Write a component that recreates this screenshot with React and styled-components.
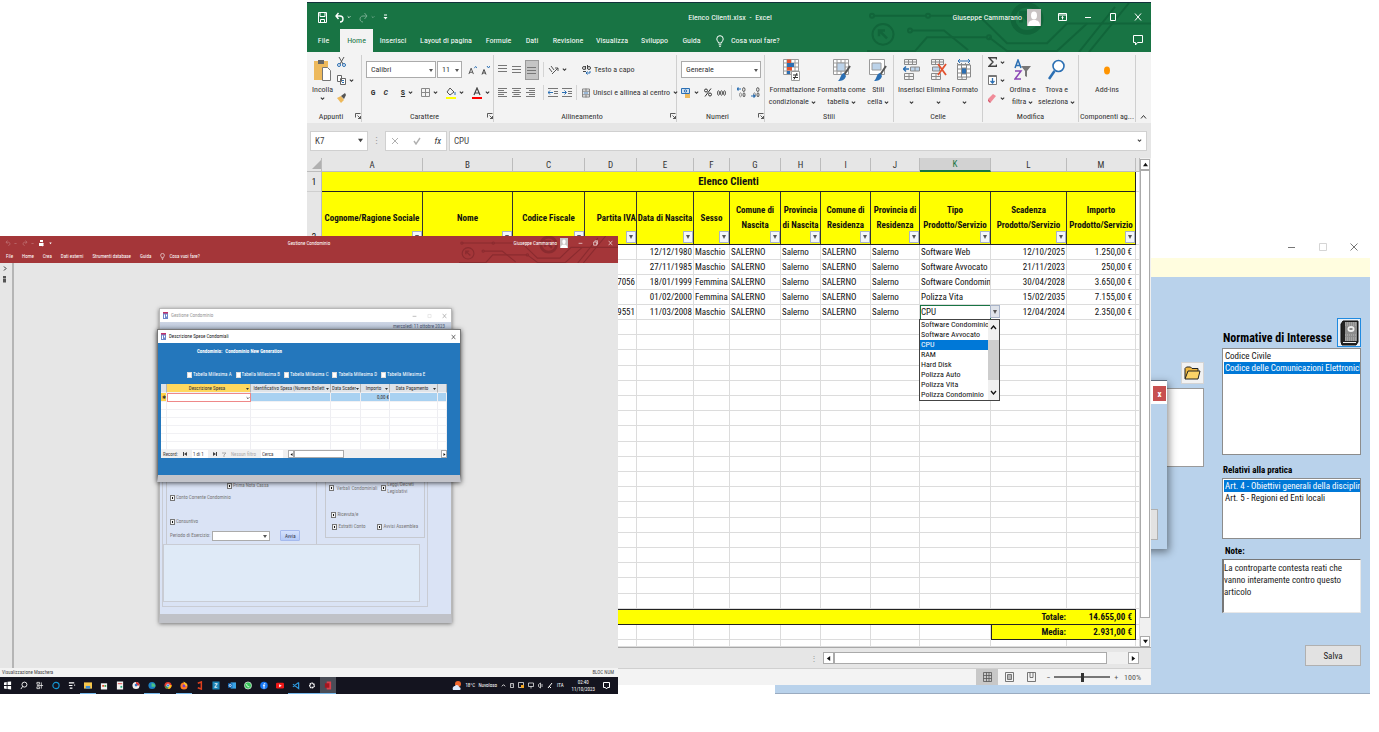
import React from "react";
import styled, { createGlobalStyle, css } from "styled-components";

const GlobalStyle = createGlobalStyle`
  *, *::before, *::after { box-sizing: border-box; }
  body { margin: 0; background: #fff; font-family: "Roboto Condensed", Roboto, "Liberation Sans", sans-serif; color: #222; }
  button, input, select, textarea { font: inherit; color: inherit; margin: 0; }
  button { border: 0; padding: 0; background: none; }
  svg { display: block; flex: none; }
  ul { list-style: none; margin: 0; padding: 0; }
`;

const Desktop = styled.main`
  position: relative;
  min-height: 100vh;
  overflow: hidden;
`;

/* ---------- shared pieces ---------- */
const Icon = ({ w = 10, h = w, box = `0 0 ${w} ${h}`, children, ...rest }) => (
  <svg width={w} height={h} viewBox={box} fill="none" stroke="currentColor" strokeWidth="1" aria-hidden="true" {...rest}>
    {children}
  </svg>
);

const Caret = ({ size = 5 }) => (
  <Icon w={size} h={size} box="0 0 6 6"><path d="M1 2l2 2 2-2" strokeWidth="1.3" /></Icon>
);

const Avatar = ({ w, h }) => (
  <Icon w={w} h={h} box="0 0 14 17" preserveAspectRatio="none" stroke="none">
    <rect width="14" height="17" fill="#c8c3c3" />
    <ellipse cx="7" cy="6.5" rx="3" ry="4" fill="#fff" />
    <path d="M1 17c0-4 2-6 6-6s6 2 6 6z" fill="#fff" />
  </Icon>
);

const Bulb = ({ w = 8, h = 12 }) => (
  <Icon w={w} h={h} box="0 0 8 12"><path d="M2.500 8C2.500 6.500.800 6 .800 3.900a3.200 3.200 0 016.400 0C7.200 6 5.500 6.500 5.500 8zM2.700 9.800h2.600M3.200 11.400h1.600" /></Icon>
);

const Circuit = styled.svg`
  position: absolute;
  top: 0;
  right: 0;
  height: 100%;
  width: ${p => p.$w}px;
  pointer-events: none;
`;

const CircuitArt = ({ w, color }) => (
  <Circuit $w={w} viewBox="0 0 286 50" preserveAspectRatio="none" fill="none" stroke={color} strokeWidth="2" aria-hidden="true">
    <circle cx="18" cy="32" r="10.500" /><path d="M14 28l8 8M14 34v-6h6" strokeWidth="2.500" />
    <circle cx="7" cy="13" r="2" /><path d="M9 13h52" /><circle cx="63" cy="13" r="2" />
    <circle cx="45" cy="28" r="2" /><path d="M47 28h32l24 20" />
    <path d="M2 49h48l12-14h60" /><circle cx="124" cy="35" r="2" />
    <circle cx="162" cy="16" r="14" strokeWidth="5" /><path d="M156 10l12 12M156 20V10h10" strokeWidth="4" />
    <path d="M64 13h50l28 28h40l20-20h84" />
    <path d="M124 35l18 14h50l30-28M214 50l36-46M224 50l40-50" />
  </Circuit>
);

/* ---------- spreadsheet window ---------- */
const ExcelWindow = styled.section`
  position: absolute;
  left: 307px;
  right: 228px;
  top: 2px;
  background: #e6e6e6;
  font-size: 8px;
  z-index: 2;
`;

const ExcelHead = styled.header`
  position: relative;
  background: #187444;
  color: #fff;
  border-top: 1px solid #12323c;
`;

const TitleRow = styled.div`
  position: relative;
  z-index: 1;
  display: grid;
  grid-template-columns: 1fr auto 1fr;
  align-items: center;
  height: 26px;
  padding: 2px 9px 0 11px;
`;

const Cluster = styled.div`
  display: flex;
  align-items: center;
  gap: ${p => p.$gap}px;
  justify-content: ${p => (p.$end ? "flex-end" : "flex-start")};
`;

const IconButton = styled.button`
  display: flex;
  align-items: center;
  justify-content: center;
  gap: 3px;
  opacity: ${p => (p.$dim ? 0.4 : 1)};
`;

const TabRow = styled.nav`
  position: relative;
  z-index: 1;
  display: flex;
  height: 23px;
  font-size: 8px;
`;

const Tab = styled.button`
  width: ${p => p.$w}px;
  white-space: nowrap;
  color: ${p => (p.$on ? "#187444" : "#fff")};
  background: ${p => (p.$on ? "#f3f3f3" : "transparent")};
`;

const TellMe = styled.button`
  display: flex;
  align-items: center;
  gap: 7px;
  margin-left: 8px;
`;

const Comments = styled(IconButton)`
  margin-left: auto;
  padding-right: 8px;
`;

const Ribbon = styled.div`
  display: flex;
  height: 71px;
  background: #f3f3f3;
  color: #333;
`;

const Group = styled.section`
  flex: ${p => p.$w} 1 ${p => p.$w}px;
  min-width: 0;
  display: flex;
  flex-direction: column;
  margin: 3px 0 1px;
  border-right: 1px solid #cfcfcf;
`;

const GroupBody = styled.div`
  flex: 1;
  display: flex;
  justify-content: ${p => (p.$spread ? "space-evenly" : "flex-start")};
  padding: 1px ${p => (p.$pad ?? 4)}px 0;
  gap: ${p => p.$gap ?? 0}px;
`;

const GroupLabel = styled.footer`
  display: flex;
  align-items: center;
  height: 12px;
  span { flex: 1; text-align: center; white-space: nowrap; }
`;

const Stack = styled.div`
  display: flex;
  flex-direction: column;
  padding-top: 2px;
`;

const ToolRow = styled.div`
  display: flex;
  align-items: center;
  height: 23px;
  gap: ${p => p.$gap ?? 5}px;
`;

const Tool = styled.button`
  display: flex;
  align-items: center;
  gap: 3px;
  white-space: nowrap;
  ${p => p.$on && css`background: #c5c5c5; outline: 1px solid #9a9a9a; padding: 3px 1px; height: 18px;`}
`;

const Rule = styled.i`
  width: 1px;
  height: 15px;
  background: #d4d4d4;
`;

const BigTool = styled.button`
  display: flex;
  flex-direction: column;
  align-items: center;
  justify-content: flex-start;
  line-height: 12px;
  white-space: nowrap;
  min-width: 0;
  b { font-weight: 400; height: 28px; display: flex; align-items: center; }
  span { display: flex; align-items: center; gap: 2px; height: 12px; }
`;

const SideTools = styled.div`
  display: flex;
  flex-direction: column;
  gap: 8px;
  padding-top: 1px;
  button { height: 10px; }
`;

const Picker = styled.label`
  position: relative;
  display: flex;
  width: ${p => p.$w}px;
  height: ${p => p.$h || 17}px;
  border: 1px solid #ababab;
  background: #fff;
  select { appearance: none; border: 0; background: transparent; width: 100%; padding: 0 4px; outline: 0; }
  &::after {
    content: "";
    position: absolute;
    right: 2px;
    top: calc(50% - 1px);
    border: 2px solid transparent;
    border-top: 3px solid #555;
    border-bottom: 0;
  }
`;

const Launcher = () => (
  <Icon w={6} h={6} box="0 0 6 6"><path d="M.500 4.500v-4h5M2.500 2.500l3 3M5.500 3v2.500H3" strokeWidth=".8" /></Icon>
);

const Lines = ({ rows = [1, 4, 7], short = false, align = 0 }) => (
  <Icon w={10} h={9} stroke="#777">
    {rows.map((y, i) => {
      const cut = short && i % 2 ? 3 : 0;
      return <path key={y} d={`M${(cut * align) / 2} ${y + 0.5}h${9 - cut}`} />;
    })}
  </Icon>
);

const FormulaBar = styled.div`
  display: flex;
  align-items: center;
  height: 35px;
  padding: 0 4px 0 3px;
  font-size: 9px;
  color: #444;
`;

const FieldBox = styled.label`
  position: relative;
  display: flex;
  align-items: center;
  height: 20px;
  border: 1px solid #d0d0d0;
  background: #fff;
  flex: ${p => (p.$w ? `0 0 ${p.$w}px` : 1)};
  input { width: 100%; border: 0; background: transparent; padding: 0 4px; outline: 0; }
  svg { margin-right: 4px; }
`;

const FxBox = styled(FieldBox).attrs({ as: "div" })`
  justify-content: space-around;
  margin-right: 2px;
  color: #b0b0b0;
  em { color: #333; }
`;

const Grip = styled.span`
  width: 17px;
  text-align: center;
  color: #999;
`;

const SheetArea = styled.div`
  display: flex;
  border-bottom: 1px solid #a8a8a8;
`;

const Sheet = styled.table`
  flex: 1;
  width: 100%;
  min-width: 0;
  table-layout: fixed;
  border-collapse: separate;
  border-spacing: 0;
  background: #fff;
  font-size: 9px;
  line-height: 14px;
  color: #111;
  td, th { padding: 0; overflow: hidden; white-space: nowrap; }
`;

const ColHead = styled.th`
  height: 14px;
  line-height: 12px;
  font-weight: 400;
  font-size: 9px;
  background: ${p => (p.$on ? "#d2d2d2" : "#e6e6e6")};
  color: ${p => (p.$on ? "#187444" : "#333")};
  border-right: 1px solid #bcbcbc;
  border-bottom: ${p => (p.$on ? "2px solid #187444" : "1px solid #bcbcbc")};
`;

const Corner = styled(ColHead)`
  svg { margin-left: auto; }
`;

const RowHead = styled.th`
  background: #e6e6e6;
  border-right: 1px solid #bcbcbc;
  border-bottom: 1px solid #cfcfcf;
  font-weight: 400;
  font-size: 9px;
  vertical-align: ${p => (p.$low ? "bottom" : "middle")};
`;

const Banner = styled.th`
  height: 20px;
  background: #ff0;
  border-right: 1px solid #222;
  border-bottom: 1px solid #222;
  font-size: 11px;
`;

const FieldHead = styled.th`
  position: relative;
  height: 53px;
  background: #ff0;
  border-right: 1px solid #333;
  border-bottom: 1px solid #222;
  font-size: 9px;
  line-height: 15px;
  text-align: ${p => p.$align || "center"};
  &&& { white-space: pre; }
`;

const FilterButton = styled.button`
  position: absolute;
  right: 0;
  bottom: 1px;
  width: 10px;
  height: 12px;
  border: 1px solid #a9b4c8;
  background: #f4f6fa;
  &::after {
    content: "";
    display: block;
    margin: 0 auto;
    width: 0;
    border: 2px solid transparent;
    border-top: 4px solid #555;
    border-bottom: 0;
  }
`;

const Row = styled.tr`
  height: ${p => p.$h || 15}px;
`;

const Cell = styled.td`
  border-right: 1px solid #dcdcdc;
  border-bottom: 1px solid #dcdcdc;
  text-align: ${p => (p.$right ? "right" : "left")};
  &&& { padding: 0 ${p => (p.$gap ?? 1)}px; }
`;

const ActiveCell = styled(Cell)`
  position: relative;
  outline: 1px solid #187444;
  outline-offset: -1px;
  &&& { overflow: visible; }
`;

const SumCell = styled.td`
  background: #ff0;
  border-bottom: 1px solid #222;
  border-top: ${p => (p.$top ? "1px solid #222" : "0")};
  border-left: ${p => (p.$edge ? "1px solid #222" : "0")};
  border-right: ${p => (p.$end ? "1px solid #222" : "0")};
  font-weight: 700;
  text-align: right;
  &&& { padding-right: ${p => (p.$end ? 3 : 1)}px; }
`;

const CellArrow = styled(FilterButton)`
  right: -10px;
  bottom: 1px;
  height: 13px;
  background: #dfe3ea;
`;

const CellMenu = styled.div`
  position: absolute;
  z-index: 3;
  top: 14px;
  left: -1px;
  right: -10px;
  display: flex;
  border: 1px solid #444;
  background: #fff;
  font-size: 8px;
  line-height: 10px;
  ul { flex: 1; min-width: 0; }
`;

const Option = styled.li`
  padding-left: 1px;
  overflow: hidden;
  white-space: nowrap;
  background: ${p => (p.$on ? "#0078d7" : "transparent")};
  color: ${p => (p.$on ? "#fff" : "#111")};
`;

const MenuScroll = styled.div`
  width: 11px;
  display: flex;
  flex-direction: column;
  align-items: center;
  justify-content: space-between;
  padding: 5px 0;
  background: #f0f0f0;
  i { width: 11px; height: 40px; background: #cdcdcd; }
`;

const VScroll = styled.div`
  width: 11px;
  display: flex;
  flex-direction: column;
  padding: 1px 1px 0 0;
  background: #f0f0f0;
`;

const ScrollArrow = styled.button`
  flex: 0 0 11px;
  border: 1px solid #aaa;
  background: #fff;
  display: flex;
  align-items: center;
  justify-content: center;
  color: #111;
`;

const Thumb = styled.i`
  flex: ${p => p.$grow || 1};
  background: #fff;
  border: 1px solid #aaa;
`;

const Track = styled.i`
  flex: ${p => p.$grow || 1};
`;

const Arrow = ({ d }) => (
  <Icon w={5} h={5} box="0 0 6 6" fill="currentColor" stroke="none"><path d={d} /></Icon>
);
const UP = "M3 1l3 4H0z", DOWN = "M3 5l3-4H0z", LEFT = "M1 3l4-3v6z", RIGHT = "M5 3L1 0v6z";

const SheetBar = styled.div`
  display: flex;
  align-items: center;
  justify-content: flex-end;
  height: 20px;
  padding: 0 12px 0 0;
`;

const HScroll = styled.div`
  display: flex;
  width: 38%;
  height: 12px;
  background: #f0f0f0;
`;

const ExcelStatus = styled.footer`
  display: flex;
  align-items: center;
  justify-content: flex-end;
  gap: 4px;
  height: 17px;
  padding-right: 10px;
  background: #f3f3f3;
  border-top: 1px solid #d0d0d0;
  color: #555;
`;

const ViewButton = styled.button`
  width: 22px;
  height: 16px;
  display: flex;
  align-items: center;
  justify-content: center;
  background: ${p => (p.$on ? "#c8c8c8" : "transparent")};
`;

const Zoom = styled.input`
  appearance: none;
  width: 56px;
  height: 2px;
  background: #777;
  &::-webkit-slider-thumb { appearance: none; width: 3px; height: 9px; background: #333; }
`;

/* ---------- spreadsheet data ---------- */
const TABS = [["File", 33], ["Home", 33], ["Inserisci", 40], ["Layout di pagina", 66], ["Formule", 39], ["Dati", 28], ["Revisione", 44], ["Visualizza", 44], ["Sviluppo", 41], ["Guida", 33]];
const COLUMNS = [
  ["A", 101, "Cognome/Ragione Sociale"], ["B", 90, "Nome"], ["C", 72, "Codice Fiscale"], ["D", 52, "Partita IVA", "right"],
  ["E", 57, "Data di Nascita"], ["F", 36, "Sesso"], ["G", 51, "Comune di\nNascita"], ["H", 40, "Provincia\ndi Nascita"],
  ["I", 50, "Comune di\nResidenza"], ["J", 49, "Provincia di\nResidenza"], ["K", 71, "Tipo\nProdotto/Servizio"],
  ["L", 76, "Scadenza\nProdotto/Servizio"], ["M", 69, "Importo\nProdotto/Servizio"],
];
const CLIENTS = [
  ["", "12/12/1980", "Maschio", "Software Web", "12/10/2025", "1.250,00 €"],
  ["", "27/11/1985", "Maschio", "Software Avvocato", "21/11/2023", "250,00 €"],
  ["01234567056", "18/01/1999", "Femmina", "Software Condominio", "30/04/2028", "3.650,00 €"],
  ["", "01/02/2000", "Femmina", "Polizza Vita", "15/02/2035", "7.155,00 €"],
  ["01234579551", "11/03/2008", "Maschio", "CPU", "12/04/2024", "2.350,00 €"],
];
const PRODUCTS = ["Software Condominio", "Software Avvocato", "CPU", "RAM", "Hard Disk", "Polizza Auto", "Polizza Vita", "Polizza Condominio"];

const CellsArt = ({ mark }) => (
  <Icon w={17} h={23} box="0 0 17 23" stroke="#8a8a8a">
    <path d="M1.500.500h12v5h-12zM5.500.500v5M9.500.500v5M1.500 3h12M1.500 14.500h9v6h-9zM6 14.500v6M1.500 17.500h9" />
    {mark === "in" && <><path d="M7.500 8h9v4h-9zM12 8v4" fill="#bcd3ea" /><path d="M0 10h6M3 7.500L.500 10 3 12.500" stroke="#2b6fb3" strokeWidth="1.500" /></>}
    {mark === "out" && <><path d="M2.500 8h7v4h-7z" fill="#bcd3ea" /><path d="M8 5l8 11M16 5L8 16" stroke="#e2522f" strokeWidth="1.800" /></>}
    {mark === "fmt" && <><path d="M1.500 6h13v12h-13zM5.500 6v12M10.500 6v12M1.500 10h13M1.500 14h13" fill="#fff" /><path d="M5.500 9h5v6h-5z" fill="#2b6fb3" /><path d="M1 0h15v4H1z" fill="#f3f3f3" stroke="none" /><path d="M2 2h12M4 0L2 2l2 2M12 0l2 2-2 2" stroke="#2b6fb3" /></>}
  </Icon>
);

const StyleArt = ({ kind }) => (
  <Icon w={18} h={24} box="0 0 18 24" stroke="#9a9a9a">
    <path d="M.500 1.500h15v15h-15z" fill="#fff" />
    {kind !== "cell" && <path d="M.500 5h15M.500 9h15M.500 13h15M4 1.500v15M8 1.500v15M12 1.500v15" />}
    {kind === "cond" && <><path d="M4 1.500h4v3.500H4zM4 9h5v3.500H4z" fill="#e2522f" stroke="none" /><path d="M4 5h7v4H4zM4 13h3v3H4z" fill="#2b6fb3" stroke="none" /><path d="M8.500 13.500h8v9h-8z" fill="#fff" /><path d="M10 17h5M10 19.500h5M14 15l-3 6.500" stroke="#333" /></>}
    {kind === "table" && <path d="M4 5h8v8H4z" fill="#bcd3ea" />}
    {kind === "cell" && <path d="M3 5h9v7H3z" fill="#bcd3ea" />}
    {kind !== "cond" && <><path d="M17 8l-6 9" stroke="#555" strokeWidth="2" /><path d="M11 15l2 3c-1 4-4 5-8 5 3-2 2-7 6-8z" fill="#2b6fb3" stroke="none" /></>}
  </Icon>
);

const Collapse = styled.button`
  width: 15px;
  display: flex;
  align-items: flex-end;
  justify-content: center;
  padding-bottom: 3px;
`;

function RibbonArea() {
  return (
    <Ribbon>
      <Group $w={55}>
        <GroupBody $pad={5} $gap={4}>
          <BigTool>
            <b><Icon w={18} h={24} box="0 0 18 24" stroke="none"><path d="M0 3h14v19H0z" fill="#edb95c" /><path d="M4 2h6v4H4z" fill="#666" /><path d="M8.500 9.500h5l3 3v10h-8z" fill="#fff" stroke="#777" /></Icon></b>
            <span>Incolla</span><Caret />
          </BigTool>
          <SideTools>
            <Tool aria-label="Taglia"><Icon w={9} h={10} box="0 0 9 10" stroke="#555"><path d="M2 0l4 7M7 0L3 7" /><circle cx="2" cy="8" r="1.500" stroke="#2b6fb3" /><circle cx="7" cy="8" r="1.500" stroke="#2b6fb3" /></Icon></Tool>
            <Tool aria-label="Copia"><Icon w={9} h={10} box="0 0 9 10" stroke="#666" fill="#fff"><path d="M.500.500h4v6h-4zM3.500 3.500h5v6h-5z" /><path d="M5 5.500h2M5 7.500h2" stroke="#2b6fb3" /></Icon><Caret /></Tool>
            <Tool aria-label="Copia formato"><Icon w={9} h={10} box="0 0 9 10" stroke="none"><path d="M0 5l4-2 3 4-3 3z" fill="#edb95c" /><path d="M4 3l4-3 1 2-2 4z" fill="#555" /></Icon></Tool>
          </SideTools>
        </GroupBody>
        <GroupLabel><span>Appunti</span><Launcher /></GroupLabel>
      </Group>

      <Group $w={132}>
        <GroupBody>
          <Stack>
            <ToolRow $gap={1}>
              <Picker $w={70}><select aria-label="Tipo di carattere"><option>Calibri</option></select></Picker>
              <Picker $w={25}><select aria-label="Dimensione carattere"><option>11</option></select></Picker>
              <ToolRow $gap={4}>
                <Tool aria-label="Aumenta">&nbsp;<Icon w={9} h={10} box="0 0 10 10"><path d="M1 9.500L3.500 3 6 9.500M2 7.500h3" stroke="#444" /><path d="M7 3l1.500-2L10 3" stroke="#2b6fb3" /></Icon></Tool>
                <Tool aria-label="Riduci"><Icon w={9} h={10} box="0 0 9 10"><path d="M1 9.500L3 4.500 5 9.500M2 8h2" stroke="#444" /><path d="M6 1l1.500 2L9 1" stroke="#2b6fb3" /></Icon></Tool>
              </ToolRow>
            </ToolRow>
            <ToolRow $gap={8}>
              <Tool>&nbsp;<b>G</b></Tool><Tool><em><b>C</b></em></Tool><Tool>&nbsp;<u><b>S</b></u><Caret /></Tool>
              <Tool aria-label="Bordi"><Icon w={9}><path d="M.500.500h8v8h-8zM4.500.500v8M.500 4.500h8" stroke="#888" /></Icon><Caret /></Tool>
              <Tool aria-label="Riempimento"><Icon w={10} h={12} box="0 0 10 12"><path d="M4 1L1 5l3 3 4-3z" stroke="#555" /><path d="M9 5v3" stroke="#2b6fb3" /><path d="M0 10h10v2H0z" fill="#ff0" stroke="none" /></Icon><Caret /></Tool>
              <Tool aria-label="Colore carattere"><Icon w={10} h={12} box="0 0 10 12"><path d="M2 8l3-7 3 7M3 6h4" stroke="#444" strokeWidth="1.200" /><path d="M0 10h10v2H0z" fill="red" stroke="none" /></Icon><Caret /></Tool>
            </ToolRow>
          </Stack>
        </GroupBody>
        <GroupLabel><span>Carattere</span><Launcher /></GroupLabel>
      </Group>

      <Group $w={183}>
        <GroupBody $gap={5}>
          <Stack>
            <ToolRow $gap={4}><Tool><Lines rows={[0, 3, 6]} /></Tool><Tool><Lines rows={[1, 4, 7]} /></Tool><Tool $on><Lines rows={[2, 5, 8]} /></Tool></ToolRow>
            <ToolRow $gap={4}><Tool><Lines rows={[0, 2, 4, 6, 8]} short /></Tool><Tool><Lines rows={[0, 2, 4, 6, 8]} short align={1} /></Tool><Tool><Lines rows={[0, 2, 4, 6, 8]} short align={2} /></Tool></ToolRow>
          </Stack>
          <Stack>
            <ToolRow $gap={4}><Rule /><Tool aria-label="Orientamento"><Icon w={11} h={10} box="0 0 11 10" stroke="#555"><path d="M1 3l3 4M3 1l3 4M4 9l6-6M10 6V3H7" /></Icon><Caret /></Tool></ToolRow>
            <ToolRow $gap={4}>
              <Rule />
              {["M5 4.500H0M2 2.500L0 4.500l2 2", "M0 4.500h4M2.500 2.500l2 2-2 2"].map(d => (
                <Tool key={d} aria-label="Rientro"><Icon w={10} h={9} stroke="#777"><path d="M0 .500h10M6 3.500h4M6 5.500h4M0 8.500h10" /><path d={d} stroke="#2b6fb3" /></Icon></Tool>
              ))}
              <Rule />
            </ToolRow>
          </Stack>
          <Stack>
            <ToolRow><Tool><Icon w={9} h={10} box="0 0 9 10" stroke="#444"><circle cx="2" cy="3" r="1.500" /><path d="M3.500 1v3.500M5.500 0v4M1 6.500h3" /><circle cx="7" cy="3" r="1.500" /><path d="M8 6v2H4M5.500 6.500L4 8l1.500 1.500" stroke="#2b6fb3" /></Icon>Testo a capo</Tool></ToolRow>
            <ToolRow><Tool><Icon w={8} h={10} box="0 0 9 10" stroke="#777"><path d="M.500.500h8v9h-8zM.500 3h8M.500 7h8M4.500 0v3M4.500 7v3" /><path d="M2 5h5" stroke="#2b6fb3" /></Icon>Unisci e allinea al centro<Caret /></Tool></ToolRow>
          </Stack>
        </GroupBody>
        <GroupLabel><span>Allineamento</span><Launcher /></GroupLabel>
      </Group>

      <Group $w={88}>
        <GroupBody>
          <Stack>
            <ToolRow><Picker $w={80}><select aria-label="Formato numero"><option>Generale</option></select></Picker></ToolRow>
            <ToolRow $gap={5}>
              <Tool aria-label="Valuta"><Icon w={10} h={12} box="0 0 10 12"><path d="M.500 1.500h8v5h-8z" stroke="#2b6fb3" fill="#cfe0f1" /><circle cx="4.500" cy="4" r="1.200" stroke="#2b6fb3" /><path d="M4 7h5v4H4z" fill="#edb95c" stroke="none" /></Icon><Caret /></Tool>
              <Tool aria-label="Percentuale"><Icon w={8} h={9} box="0 0 8 9"><circle cx="2" cy="2.500" r="1.500" /><circle cx="6" cy="6.500" r="1.500" /><path d="M7 .500l-6 8" /></Icon></Tool>
              <Tool aria-label="Migliaia"><Icon w={9} h={6} box="0 0 9 6" strokeWidth=".8"><ellipse cx="1.500" cy="3" rx="1" ry="2.300" /><ellipse cx="4.500" cy="3" rx="1" ry="2.300" /><ellipse cx="7.500" cy="3" rx="1" ry="2.300" /></Icon></Tool>
              <Rule />
              {["M4 2H0M1.500.500L0 2l1.500 1.500", "M0 9h4M2.500 7.500L4 9l-1.500 1.500"].map(d => (
                <Tool key={d} aria-label="Decimali"><Icon w={9} h={11} box="0 0 9 11" strokeWidth=".8"><ellipse cx="6.800" cy="2.600" rx="1.200" ry="2" /><ellipse cx="3.500" cy="7.800" rx="1" ry="2" opacity=".6" /><ellipse cx="7" cy="7.800" rx="1" ry="2" /><path d={d} stroke="#2b6fb3" strokeWidth="1.200" /></Icon></Tool>
              ))}
            </ToolRow>
          </Stack>
        </GroupBody>
        <GroupLabel><span>Numeri</span><Launcher /></GroupLabel>
      </Group>

      <Group $w={129}>
        <GroupBody $spread $pad={2}>
          <BigTool><b><StyleArt kind="cond" /></b><span>Formattazione</span><span>condizionale <Caret /></span></BigTool>
          <BigTool><b><StyleArt kind="table" /></b><span>Formatta come</span><span>tabella <Caret /></span></BigTool>
          <BigTool><b><StyleArt kind="cell" /></b><span>Stili</span><span>cella <Caret /></span></BigTool>
        </GroupBody>
        <GroupLabel><span>Stili</span></GroupLabel>
      </Group>

      <Group $w={89}>
        <GroupBody $spread $pad={2}>
          <BigTool><b><CellsArt mark="in" /></b><span>Inserisci</span><span><Caret /></span></BigTool>
          <BigTool><b><CellsArt mark="out" /></b><span>Elimina</span><span><Caret /></span></BigTool>
          <BigTool><b><CellsArt mark="fmt" /></b><span>Formato</span><span><Caret /></span></BigTool>
        </GroupBody>
        <GroupLabel><span>Celle</span></GroupLabel>
      </Group>

      <Group $w={96}>
        <GroupBody $pad={5} $gap={6}>
          <SideTools>
            <Tool aria-label="Somma"><Icon w={9} h={10} box="0 0 9 10" stroke="#444"><path d="M8.500 2.500V.700H1L5 5 1 9.300h7.500V7.500" strokeWidth="1.400" /></Icon><Caret /></Tool>
            <Tool aria-label="Riempi"><Icon w={9} h={10} box="0 0 9 10" stroke="#777"><path d="M.500.500h8v9h-8z" fill="#fff" /><path d="M.500 1.500h8" /><path d="M4.500 3v5M2.500 6l2 2 2-2" stroke="#2b6fb3" strokeWidth="1.300" /></Icon><Caret /></Tool>
            <Tool aria-label="Cancella"><Icon w={9} h={10} box="0 0 9 10" stroke="none"><path d="M0 6l5-5 3 2-5 6z" fill="#f08b98" /><path d="M0 6l3 3-1 1-2-2z" fill="#d8566a" /></Icon><Caret /></Tool>
          </SideTools>
          <BigTool>
            <b><Icon w={17} h={22} box="0 0 17 22"><path d="M1 9l3-8 3 8M2 6.500h4" stroke="#2b6fb3" strokeWidth="1.500" /><path d="M1 12h6L1 20h6" stroke="#8b45b5" strokeWidth="1.500" /><path d="M7 7h10l-4 5v6l-2-1v-5z" fill="#777" stroke="none" /></Icon></b>
            <span>Ordina e</span><span>filtra <Caret /></span>
          </BigTool>
          <BigTool>
            <b><Icon w={17} h={22} box="0 0 17 22"><circle cx="10.500" cy="7" r="5.500" fill="#fff" stroke="#2b6fb3" strokeWidth="1.600" /><path d="M6.500 12L1 20" stroke="#2b6fb3" strokeWidth="2.600" /></Icon></b>
            <span>Trova e</span><span>seleziona <Caret /></span>
          </BigTool>
        </GroupBody>
        <GroupLabel><span>Modifica</span></GroupLabel>
      </Group>

      <Group $w={57}>
        <GroupBody $spread $pad={2}>
          <BigTool><b><Icon w={8} h={9} box="0 0 8 9"><ellipse cx="4" cy="4.500" rx="3" ry="4" fill="#ff9400" stroke="none" /></Icon></b><span>Add-ins</span></BigTool>
        </GroupBody>
        <GroupLabel><span>Componenti ag...</span></GroupLabel>
      </Group>
      <Collapse aria-label="Comprimi"><Icon w={7} h={6} box="0 0 7 6"><path d="M1 4.500l2.500-3 2.500 3" /></Icon></Collapse>
    </Ribbon>
  );
}

const EMPTY_ROWS = Array.from({ length: 19 }, (_, i) => i + 8);

function Excel() {
  return (
    <ExcelWindow aria-label="Elenco Clienti">
      <ExcelHead>
        <CircuitArt w={286} color="#11653a" />
        <TitleRow>
          <Cluster $gap={8}>
            <IconButton aria-label="Salva"><Icon w={9} h={11} box="0 0 9 11"><path d="M.500.500h8v10h-8zM2 .500v4h5v-4M2.500 10.500v-3h4v3" /></Icon></IconButton>
            <IconButton aria-label="Annulla"><Icon w={9} h={11} box="0 0 9 11"><path d="M3.500 1L1 4l2.500 3M1 4h4c4 0 4 6 0 6" strokeWidth="1.400" /></Icon><Caret size={4} /></IconButton>
            <IconButton $dim aria-label="Ripeti"><Icon w={9} h={11} box="0 0 9 11"><path d="M5.500 1L8 4 5.500 7M8 4H4c-4 0-4 6 0 6" /></Icon><Caret size={4} /></IconButton>
            <IconButton aria-label="Personalizza"><Icon w={5} h={6} box="0 0 5 6"><path d="M1 1h3" /><path d="M.500 3h4l-2 2.500z" fill="#fff" stroke="none" /></Icon></IconButton>
          </Cluster>
          <span>Elenco Clienti.xlsx &nbsp;-&nbsp; Excel</span>
          <Cluster $gap={17} $end>
            <Cluster $gap={5}>Giuseppe Cammarano<Avatar w={14} h={17} /></Cluster>
            <IconButton aria-label="Opzioni"><Icon w={9} h={8} box="0 0 9 8"><path d="M.500.500h8v7h-8zM.500 2h8M4.500 6.500v-3M3.500 4.500l1-1 1 1" /></Icon></IconButton>
            <IconButton aria-label="Riduci"><Icon w={8}><path d="M1 4.500h6" /></Icon></IconButton>
            <IconButton aria-label="Ingrandisci"><Icon w={8}><path d="M1.500.500h5v7h-5z" /></Icon></IconButton>
            <IconButton aria-label="Chiudi"><Icon w={8}><path d="M1 .500l6 7M7 .500l-6 7" /></Icon></IconButton>
          </Cluster>
        </TitleRow>
        <TabRow>
          {TABS.map(([name, w]) => <Tab key={name} $w={w} $on={name === "Home"}>{name}</Tab>)}
          <TellMe><Bulb />Cosa vuoi fare?</TellMe>
          <Comments aria-label="Commenti"><Icon w={10} h={11} box="0 0 10 11"><path d="M.500.500h9v7h-5l-2 2.500v-2.500h-2z" /></Icon></Comments>
        </TabRow>
      </ExcelHead>
      <RibbonArea />
      <FormulaBar>
        <FieldBox $w={58}><input aria-label="Casella nome" defaultValue="K7" /><Arrow d={DOWN} /></FieldBox>
        <Grip>⋮</Grip>
        <FxBox $w={62}>
          <Icon w={8}><path d="M1 1l6 6M7 1L1 7" /></Icon>
          <Icon w={8}><path d="M1 4l2 3 4-6" strokeWidth="1.400" /></Icon>
          <em>fx</em>
        </FxBox>
        <FieldBox><input aria-label="Barra della formula" defaultValue="CPU" /><Caret /></FieldBox>
      </FormulaBar>
      <SheetArea>
        <Sheet>
          <colgroup>
            <col style={{ width: 15 }} />
            {COLUMNS.map(([c, w]) => <col key={c} style={{ width: w }} />)}
            <col style={{ width: 4 }} />
          </colgroup>
          <thead>
            <tr>
              <Corner><Icon w={9} h={9} stroke="none"><path d="M9 0v9H0z" fill="#b0b0b0" /></Icon></Corner>
              {COLUMNS.map(([c]) => <ColHead key={c} $on={c === "K"}>{c}</ColHead>)}
              <ColHead />
            </tr>
            <tr><RowHead>1</RowHead><Banner colSpan={13}>Elenco Clienti</Banner><Cell /></tr>
            <tr>
              <RowHead $low>2</RowHead>
              {COLUMNS.map(([c, , label, align]) => (
                <FieldHead key={c} $align={align}>{label}<FilterButton aria-label={`Filtra ${c}`} /></FieldHead>
              ))}
              <Cell />
            </tr>
          </thead>
          <tbody>
            {CLIENTS.map(([iva, born, sex, item, due, sum], i) => (
              <Row key={born}>
                <RowHead>{i + 3}</RowHead><Cell /><Cell /><Cell />
                <Cell $right>{iva}</Cell><Cell $right>{born}</Cell><Cell>{sex}</Cell>
                <Cell>SALERNO</Cell><Cell>Salerno</Cell><Cell>SALERNO</Cell><Cell>Salerno</Cell>
                {item === "CPU" ? (
                  <ActiveCell>
                    {item}
                    <CellArrow aria-label="Apri elenco" />
                    <CellMenu>
                      <ul role="listbox" aria-label="Prodotti">
                        {PRODUCTS.map(p => <Option key={p} role="option" aria-selected={p === "CPU"} $on={p === "CPU"}>{p}</Option>)}
                      </ul>
                      <MenuScroll>
                        <Icon w={7} h={5} box="0 0 7 5"><path d="M1 4l2.500-3L6 4" strokeWidth="1.300" /></Icon>
                        <i />
                        <Icon w={7} h={5} box="0 0 7 5"><path d="M1 1l2.500 3L6 1" strokeWidth="1.300" /></Icon>
                      </MenuScroll>
                    </CellMenu>
                  </ActiveCell>
                ) : <Cell>{item}</Cell>}
                <Cell $right>{due}</Cell><Cell $right $gap={3}>{sum}</Cell><Cell />
              </Row>
            ))}
            {EMPTY_ROWS.map(n => (
              <Row key={n} $h={n % 5 === 0 ? 16 : 15}>
                <RowHead>{n}</RowHead>
                {COLUMNS.map(([c]) => <Cell key={c} />)}<Cell />
              </Row>
            ))}
            <Row $h={16}>
              <RowHead>27</RowHead>
              <SumCell colSpan={12} $top>Totale:</SumCell><SumCell $top $end>14.655,00 €</SumCell><Cell />
            </Row>
            <Row>
              <RowHead>28</RowHead>
              {COLUMNS.slice(0, 11).map(([c]) => <Cell key={c} />)}
              <SumCell $edge>Media:</SumCell><SumCell $end>2.931,00 €</SumCell><Cell />
            </Row>
            <Row $h={7}><RowHead />{COLUMNS.map(([c]) => <Cell key={c} />)}<Cell /></Row>
          </tbody>
        </Sheet>
        <VScroll>
          <ScrollArrow aria-label="Su"><Arrow d={UP} /></ScrollArrow>
          <Thumb $grow={25} /><Track />
          <ScrollArrow aria-label="Giù"><Arrow d={DOWN} /></ScrollArrow>
        </VScroll>
      </SheetArea>
      <SheetBar>
        <Grip>⋮</Grip>
        <HScroll>
          <ScrollArrow aria-label="Sinistra"><Arrow d={LEFT} /></ScrollArrow>
          <Thumb $grow={13} /><Track />
          <ScrollArrow aria-label="Destra"><Arrow d={RIGHT} /></ScrollArrow>
        </HScroll>
      </SheetBar>
      <ExcelStatus>
        <Cluster $gap={0}>
          <ViewButton $on aria-label="Normale"><Icon w={9} h={10} box="0 0 9 10"><path d="M.500.500h8v9h-8zM3.500.500v9M6 .500v9M.500 3.500h8M.500 6.500h8" strokeWidth=".8" /></Icon></ViewButton>
          <ViewButton aria-label="Layout di pagina"><Icon w={9} h={10} box="0 0 9 10"><path d="M.500.500h8v9h-8zM2.500 2.500h4v5h-4zM3 4h3M3 6h3" strokeWidth=".8" /></Icon></ViewButton>
          <ViewButton aria-label="Anteprima"><Icon w={9} h={10} box="0 0 9 10"><path d="M.500.500h8v9h-8zM3 .500v5h3v-5" strokeWidth=".8" /></Icon></ViewButton>
        </Cluster>
        −<Zoom type="range" defaultValue="50" aria-label="Zoom" />+<span>&nbsp;100%</span>
      </ExcelStatus>
    </ExcelWindow>
  );
}

/* ---------- legal practice window ---------- */
const LegalWindow = styled.section`
  position: absolute;
  left: 775px;
  right: 9px;
  top: 236px;
  z-index: 1;
  min-height: 458px;
  display: flex;
  flex-direction: column;
  background: #b9d2eb;
  border-bottom: 1px solid #9aabc0;
  font-size: 9px;
  line-height: 12px;
  color: #222;
`;

const LegalTitle = styled.header`
  display: flex;
  align-items: center;
  justify-content: flex-end;
  gap: 21px;
  height: 22px;
  padding-right: 11px;
  background: #fff;
  color: #777;
`;

const Strip = styled.div`
  height: 19px;
  background: #fffddf;
`;

const LegalBody = styled.div`
  display: flex;
  justify-content: flex-end;
  align-items: flex-start;
  gap: 18px;
  padding-right: 9px;
`;

const FileColumn = styled.div`
  width: 60px;
  display: flex;
  flex-direction: column;
  align-items: flex-end;
  gap: 4px;
  padding-top: 85px;
`;

const FolderButton = styled.button`
  width: 23px;
  height: 22px;
  display: flex;
  align-items: center;
  justify-content: center;
  background: #f2f2f2;
  border: 1px solid #d4d4d4;
`;

const BlankList = styled.div`
  width: 100%;
  height: 79px;
  background: #fff;
  border: 1px solid #9a9a9a;
`;

const LawColumn = styled.div`
  width: 139px;
  display: flex;
  flex-direction: column;
  padding-top: 41px;
`;

const LawHead = styled.div`
  display: flex;
  justify-content: space-between;
  align-items: flex-end;
  margin-bottom: 1px;
  h2 { margin: 0 0 0 1px; font-size: 12px; line-height: 17px; white-space: nowrap; color: #000; }
`;

const BookButton = styled.button`
  width: 24px;
  height: 29px;
  display: flex;
  align-items: center;
  justify-content: center;
  background: #e6eef7;
  border: 1px solid #1f8ae0;
`;

const ListBox = styled.ul`
  height: ${p => p.$h}px;
  padding: 1px 0 1px 1px;
  background: #fff;
  border: 1px solid #8c8c8c;
`;

const Law = styled(Option)`
  padding-left: 1px;
  line-height: 12px;
`;

const SubTitle = styled.label`
  margin: ${p => p.$top}px 0 2px 1px;
  font-weight: 700;
  font-size: 9px;
  color: #000;
`;

const Notes = styled.textarea`
  height: 54px;
  resize: none;
  padding: 2px 0;
  border: 1px solid #e8e8e8;
  border-top: 1px solid #777;
  border-left: 2px solid #777;
  outline: 0;
  overflow: hidden;
`;

const SaveButton = styled.button`
  align-self: flex-end;
  width: 56px;
  height: 21px;
  margin-top: 32px;
  background: #e2e2e2;
  border: 1px solid #b0b0b0;
`;

const LegalDialog = styled.div`
  position: absolute;
  right: 203px;
  top: 144px;
  width: 300px;
  height: 169px;
  background: #b9d2eb;
  border-top: 1px solid #5b6b7c;
  box-shadow: 2px 3px 8px rgba(0, 0, 0, 0.45);
`;

const DialogTitle = styled.div`
  height: 23px;
  padding: 5px 1px 0;
  display: flex;
  justify-content: flex-end;
  background: #fff;
`;

const RedClose = styled.button`
  width: 13px;
  height: 15px;
  background: #c75050;
  color: #fff;
  font-size: 9px;
  font-weight: 700;
`;

const DialogAction = styled(SaveButton)`
  display: block;
  height: 31px;
  margin: 105px 9px 0 auto;
`;

function Legal() {
  return (
    <LegalWindow aria-label="Gestione pratica">
      <LegalTitle>
        <Icon w={10}><path d="M1 5.500h7" /></Icon>
        <Icon w={10} stroke="#d5d5d5"><path d="M1.500 1.500h7v7h-7z" /></Icon>
        <Icon w={10}><path d="M1.500 1.500l7 7M8.500 1.500l-7 7" /></Icon>
      </LegalTitle>
      <Strip />
      <LegalBody>
        <FileColumn>
          <FolderButton aria-label="Apri cartella">
            <Icon w={17} h={14} box="0 0 17 14"><path d="M1 12.500V2.500L2.500 1h4L8 2.500h6v3" fill="#f0b840" stroke="#222" /><path d="M1 13L4 5h12l-2 8z" fill="#fbd268" stroke="#222" /></Icon>
          </FolderButton>
          <BlankList />
        </FileColumn>
        <LawColumn>
          <LawHead>
            <h2>Normative di Interesse</h2>
            <BookButton aria-label="Normative">
              <Icon w={19} h={26} box="0 0 19 26"><path d="M3 1h15v21l-2 3H2L1 22V4z" fill="#222" stroke="#111" /><path d="M5 2h12v19H5z" fill="#8c8c8c" stroke="none" /><path d="M5 3h12M5 5h12M5 15h12M5 18h12M5 20h12" stroke="#bbb" strokeDasharray="1 1" /><ellipse cx="11" cy="9" rx="3.500" ry="3" fill="#eee" stroke="none" /><path d="M9.500 9h3" stroke="#222" /><path d="M3 22.500h13" stroke="#eee" /></Icon>
            </BookButton>
          </LawHead>
          <ListBox $h={107} role="listbox" aria-label="Normative di Interesse">
            <Law role="option">Codice Civile</Law>
            <Law role="option" $on>Codice delle Comunicazioni Elettroniche</Law>
          </ListBox>
          <SubTitle as="h3" $top={9}>Relativi alla pratica</SubTitle>
          <ListBox $h={61} role="listbox" aria-label="Relativi alla pratica">
            <Law role="option" $on>Art. 4 - Obiettivi generali della disciplina</Law>
            <Law role="option">Art. 5 - Regioni ed Enti locali</Law>
          </ListBox>
          <SubTitle htmlFor="note" $top={6}>&nbsp;Note:</SubTitle>
          <Notes id="note" defaultValue={"La controparte contesta reati che\nvanno interamente contro questo\narticolo"} />
          <SaveButton>Salva</SaveButton>
        </LawColumn>
      </LegalBody>
      <LegalDialog role="dialog" aria-label="Finestra">
        <DialogTitle><RedClose>x</RedClose></DialogTitle>
        <DialogAction aria-label="Conferma" />
      </LegalDialog>
    </LegalWindow>
  );
}

/* ---------- condominium database window ---------- */
const AccessWindow = styled.section`
  position: absolute;
  left: 0;
  right: 761px;
  top: 236px;
  z-index: 3;
  background: #e6e6e6;
  font-size: 5px;
  line-height: 7px;
`;

const AccessHead = styled.header`
  position: relative;
  background: #a43639;
  color: #fff;
`;

const AccessTitle = styled(TitleRow)`
  height: 14px;
  padding: 0 5px;
`;

const AccessTabs = styled.nav`
  position: relative;
  z-index: 1;
  display: flex;
  align-items: center;
  gap: 9px;
  height: 13px;
  padding-left: 6px;
`;

const AccessTab = styled.button`
  display: flex;
  align-items: center;
  gap: 4px;
  line-height: 7px;
`;

const AccessBody = styled.div`
  position: relative;
  display: flex;
  height: 405px;
`;

const NavRail = styled.aside`
  width: 14px;
  display: flex;
  flex-direction: column;
  align-items: center;
  gap: 4px;
  padding: 2px 2px 0 0;
  border-right: 2px solid #b5b5b5;
  color: #333;
`;

const AccessStatus = styled.footer`
  display: flex;
  justify-content: space-between;
  align-items: center;
  height: 9px;
  padding: 0 4px 0 2px;
  background: #f3f3f3;
  color: #444;
`;

const FormWindow = styled.div`
  position: absolute;
  left: 159px;
  top: 45px;
  width: 293px;
  height: 315px;
  display: flex;
  flex-direction: column;
  background: #dae3f5;
  border: 1px solid #b8b8b8;
  border-bottom: 9px solid #c0c2c8;
  box-shadow: 0 1px 4px rgba(0, 0, 0, 0.5);
  color: #777;
`;

const FormTitle = styled.header`
  display: flex;
  align-items: center;
  gap: 3px;
  height: 13px;
  padding: 0 4px 0 3px;
  background: #fff;
  color: ${p => (p.$active ? "#222" : "#999")};
  span { flex: 1; }
`;

const WindowKeys = styled.div`
  display: flex;
  gap: 10px;
`;

const DateBand = styled.div`
  padding: 1px 6px 1px 0;
  text-align: right;
  background: linear-gradient(#cdd5e4, #bac6da);
  color: #4b5870;
`;

const FormBody = styled.div`
  display: flex;
  gap: 8px;
  width: 266px;
  height: 276px;
  margin-left: 2px;
  padding: 149px 2px 0 3px;
  border: 1px solid #c9ccd4;
  border-top: 0;
`;

const Panel = styled.div`
  width: ${p => p.$w}px;
  height: ${p => p.$h}px;
  border: 1px solid #c6c9d0;
  border-top: 0;
  padding: ${p => p.$pad};
  display: flex;
  flex-direction: column;
  gap: 5px;
`;

const FormRow = styled.div`
  display: flex;
  align-items: center;
  gap: ${p => p.$gap ?? 4}px;
  padding: ${p => p.$top || 0}px 0 0 ${p => p.$in || 0}px;
`;

const Check = styled.label`
  display: flex;
  align-items: center;
  gap: 1px;
  white-space: pre;
  input {
    appearance: none;
    flex: none;
    width: 5px;
    height: 6px;
    margin: 0;
    border: 1px solid ${p => (p.$light ? "#ddd" : "#777")};
    background: ${p => (p.$light ? "#fff" : "#111")};
    outline: ${p => (p.$light ? "0" : "1px solid #f5f5f5")};
    outline-offset: -2px;
  }
`;

const RunButton = styled.button`
  margin-left: 8px;
  width: 20px;
  height: 11px;
  border: 1px solid #a5baee;
  border-radius: 1px;
  background: linear-gradient(#d5e1fb, #b5cbf8);
  color: #334;
  line-height: 8px;
`;

const Preview = styled.div`
  position: absolute;
  left: 3px;
  top: 235px;
  width: 257px;
  height: 58px;
  background: #dfeaf7;
  border: 1px solid #c9ccd4;
`;

const CostDialog = styled.div`
  position: absolute;
  left: 157px;
  top: 66px;
  width: 304px;
  height: 153px;
  background: #2477bc;
  border: 1px solid #777;
  border-bottom: 7px solid #c3c4ca;
  box-shadow: 0 1px 5px rgba(0, 0, 0, 0.7);
  color: #fff;
`;

const Heading = styled.div`
  display: flex;
  gap: 3px;
  padding: 5px 0 16px 39px;
  font-weight: 700;
`;

const ChecksRow = styled.div`
  display: flex;
  gap: 4px;
  padding: 0 0 6px 29px;
`;

const CostGrid = styled.table`
  width: 286px;
  margin-left: 3px;
  table-layout: fixed;
  border-spacing: 0;
  background: #fff;
  color: #333;
  th, td { padding: 0; height: 8px; overflow: hidden; white-space: nowrap; border-right: 1px solid #eeeef2; border-bottom: 1px solid #f1f1f4; }
  th { background: #dfe3e8; font-weight: 400; border-right-color: #b5b5b5; }
`;

const CostHead = styled.th`
  && { height: 9px; background: ${p => (p.$on ? "#ffd85e" : "#dfe3e8")}; }
  div { display: flex; align-items: center; padding: 0 1px; }
  span { flex: 1; overflow: hidden; }
`;

const NewCell = styled.td`
  && { height: 9px; background: ${p => (p.$mark ? "#ffd24a" : p.$edit ? "#fff" : "#a8d1f1")}; ${p => p.$edit && "border: 1px solid #e88;"} }
  text-align: right;
  svg { margin-left: auto; }
`;

const RecordBar = styled.div`
  display: flex;
  align-items: center;
  gap: 5px;
  width: 286px;
  height: 8px;
  margin-left: 3px;
  padding-left: 2px;
  background: #f0f0f0;
  color: #444;
  white-space: nowrap;
  button { height: 8px; line-height: 7px; }
`;

const Muted = styled.span`
  color: #aaa;
`;

const RecordInput = styled.input`
  width: ${p => p.$w}px;
  height: 8px;
  border: 0;
  padding: 0 1px;
  background: #fff;
`;

const RecordScroll = styled.div`
  flex: 1;
  display: flex;
  height: 8px;
  button { flex: 0 0 6px; }
`;

const Taskbar = styled.nav`
  display: flex;
  align-items: center;
  height: 17px;
  background: #14141f;
  color: #fff;
`;

const TaskButton = styled.button`
  flex: 0 1 16px;
  height: 17px;
  display: flex;
  align-items: center;
  justify-content: center;
  background: ${p => (p.$on ? "#4a4d57" : "transparent")};
  border-bottom: 1px solid ${p => (p.$open ? "#76b9ed" : "transparent")};
`;

const Tray = styled.div`
  margin-left: auto;
  display: flex;
  align-items: center;
  gap: 4px;
  padding-right: 8px;
  time { text-align: center; line-height: 7px; margin: 0 4px; }
`;

const TASKS = [
  [<path key="a" d="M0 1l3-.500v3.500H0zM4 .300L8 0v4H4zM0 5h3v3.500L0 8zM4 5h4v4l-4-.500z" fill="#fff" stroke="none" />],
  [<g key="a"><circle cx="5" cy="3.500" r="2.800" /><path d="M3 5.500L1 8.500" /></g>],
  [<path key="a" d="M1 1h3v2H1zM1 6h3v2H1zM6 1v7M1 4.500h7" strokeWidth=".8" />],
  [<circle key="a" cx="4.500" cy="4.500" r="3.500" stroke="#1597d4" strokeWidth="1.300" />],
  [<path key="a" d="M1 1.500h6M1 4.500h4M2 7.500h3M7 4h1" strokeWidth="1.300" />],
  [<g key="a" stroke="none"><path d="M0 1h9v7H0z" fill="#f7c64b" /><path d="M2 5h5v3H2z" fill="#3c8fd6" /></g>, 1],
  [<g key="a" stroke="none"><path d="M1 2h7v7H1z" fill="#f4f4f4" /><path d="M2.500 4h2v2h-2z" fill="#e8502f" /><path d="M5 4h2v2H5z" fill="#3a9a45" /></g>],
  [<g key="a" stroke="none"><path d="M1 0h7v9H1z" fill="#f4f4f4" /><path d="M2 2h5v1H2z" fill="#da4242" /><path d="M5 5h2v2H5z" fill="#2a7" /></g>],
  [<g key="a" stroke="none"><circle cx="4.500" cy="4.500" r="4" fill="#eee" /><path d="M4.500.500a4 4 0 014 4h-4z" fill="#d33" /><circle cx="4.500" cy="4" r="1.500" fill="#2b72c8" /></g>],
  [<g key="a" stroke="none"><circle cx="4.500" cy="4.500" r="4" fill="#1b80c4" /><path d="M4 2c3 0 5 2 4 4H4z" fill="#4cc483" /></g>, 1],
  [<g key="a" stroke="none"><circle cx="4.500" cy="4.500" r="4" fill="#e33b2e" /><path d="M1 5a4 4 0 003.500 3.500L6 5z" fill="#2fa14f" /><path d="M8.500 4a4 4 0 01-4 4.500L6 4z" fill="#fbc116" /><circle cx="4.500" cy="4.500" r="1.600" fill="#3b7de0" stroke="#fff" strokeWidth=".6" /></g>],
  [<g key="a" stroke="none"><circle cx="4.500" cy="5" r="4" fill="#ff7b22" /><path d="M4 0c3 2 4 3 4 5H5z" fill="#ffc629" /><circle cx="4.500" cy="5" r="1.600" fill="#7b3ccf" /></g>, 1],
  [<path key="a" d="M2 2l4-1.500v8L2 7" stroke="#e0401e" strokeWidth="1.700" />],
  [<g key="a"><path d="M.500 0h8v9h-8z" fill="#1b86b8" stroke="none" /><path d="M3 2.500h3l-3 4h3" /></g>],
  [<g key="a" stroke="none"><path d="M3 1h6v7H3z" fill="#3aa2e4" /><path d="M0 2h5v5H0z" fill="#0f64b4" /><circle cx="2.500" cy="4.500" r="1.200" stroke="#fff" strokeWidth=".8" /></g>],
  [<g key="a"><circle cx="4.500" cy="4.500" r="4" fill="#35c457" stroke="#eee" strokeWidth=".8" /><path d="M3 3c0 2 1 3 3 3" /></g>],
  [<g key="a"><circle cx="4.500" cy="4.500" r="4.200" fill="#1877f2" stroke="none" /><path d="M6 2.500c-1.500-.500-1.500 0-1.500 1V8M3.300 4.700h2.400" /></g>],
  [<g key="a" stroke="none"><rect x="0" y="1.500" width="9" height="6.500" rx="1.500" fill="#f01818" /><path d="M3.500 3l3 1.700-3 1.700z" fill="#fff" /></g>],
  [<path key="a" d="M7.500 1v7L1 3M7.500 1L1 6M7.500 1.500v6" stroke="#2d9fe6" strokeWidth="1.300" />, 1],
  [<circle key="a" cx="4.500" cy="4.500" r="2.500" strokeWidth="1.800" strokeDasharray="1.500 .5" />, 1],
  [<g key="a" stroke="none"><path d="M3 0h5v9H3z" fill="#d9404a" /><path d="M1 2h5v5H1z" fill="#a3161f" /></g>, 1, 1],
];

const COST_COLUMNS = [["Descrizione  Spesa", 84, true], ["Identificativo Spesa (Numero Bollett", 80], ["Data Scader", 30], ["Importo", 29], ["Data Pagamento", 48], ["", 9]];

const FormGlyph = () => (
  <Icon w={5} h={7} box="0 0 5 7" stroke="none"><path d="M0 0h5v7H0z" fill="#6d86c9" /><path d="M0 0h5v1.500H0z" fill="#c0306b" /><path d="M1 2.500h1v3.500H1zM3 2.500h1v2H3z" fill="#fff" /></Icon>
);

const CheckField = ({ children, light, on }) => (
  <Check $light={light}><input type="checkbox" defaultChecked={on} />{children}</Check>
);

function Access() {
  return (
    <AccessWindow aria-label="Gestione Condominio">
      <AccessHead>
        <CircuitArt w={160} color="#8a2b2f" />
        <AccessTitle>
          <Cluster $gap={5}>
            <IconButton $dim aria-label="Annulla"><Icon w={6} h={6} box="0 0 9 11"><path d="M3.500 1L1 4l2.500 3M1 4h4c4 0 4 6 0 6" /></Icon><Caret size={3} /></IconButton>
            <IconButton $dim aria-label="Ripeti"><Icon w={6} h={6} box="0 0 9 11"><path d="M5.500 1L8 4 5.500 7M8 4H4c-4 0-4 6 0 6" /></Icon><Caret size={3} /></IconButton>
            <IconButton aria-label="Stampa"><Icon w={5} h={7} box="0 0 5 7"><path d="M0 3h4v3H0zM1 0h3v2H1z" fill="#fff" stroke="none" /><circle cx="3.500" cy="4.500" r="1.300" strokeWidth=".8" /></Icon></IconButton>
            <IconButton aria-label="Personalizza"><Icon w={3} h={4} box="0 0 5 6"><path d="M.500 2h4l-2 3z" fill="#fff" stroke="none" /></Icon></IconButton>
          </Cluster>
          <span>Gestione Condominio</span>
          <Cluster $gap={10} $end>
            <Cluster $gap={3}>Giuseppe Cammarano<Avatar w={8} h={10} /></Cluster>
            <Icon w={5} h={6} box="0 0 8 8"><path d="M1 4.500h6" /></Icon>
            <Icon w={5} h={6} box="0 0 8 8"><path d="M1 2.500h5v5H1zM3 2V.500h4.500v5H6" /></Icon>
            <Icon w={5} h={6} box="0 0 8 8"><path d="M1 .500l6 7M7 .500l-6 7" /></Icon>
          </Cluster>
        </AccessTitle>
        <AccessTabs>
          {["File", "Home", "Crea", "Dati esterni", "Strumenti database", "Guida"].map(t => <AccessTab key={t}>{t}</AccessTab>)}
          <AccessTab><Bulb w={5} h={7} />Cosa vuoi fare?</AccessTab>
        </AccessTabs>
      </AccessHead>
      <AccessBody>
        <NavRail>
          <Icon w={4} h={7} box="0 0 4 7"><path d="M1 1.500l2 2-2 2" /></Icon>
          <Icon w={4} h={7} box="0 0 4 7" stroke="none"><path d="M0 0h3v2H0zM0 2.500h3v4H0z" fill="#555" /></Icon>
        </NavRail>
        <FormWindow>
          <FormTitle>
            <FormGlyph /><span>Gestione Condominio</span>
            <WindowKeys>
              <Icon w={5} h={6} box="0 0 8 8"><path d="M1 4.500h6" /></Icon>
              <Icon w={5} h={6} box="0 0 8 8" stroke="#ddd"><path d="M1.500 1.500h5v5h-5z" /></Icon>
              <Icon w={5} h={6} box="0 0 8 8"><path d="M1 .500l6 7M7 .500l-6 7" /></Icon>
            </WindowKeys>
          </FormTitle>
          <DateBand>mercoledì 11 ottobre 2023</DateBand>
          <FormBody>
            <Panel $w={152} $h={122} $pad="2px 0 0 3px">
              <FormRow $in={57}><CheckField on>Prima Nota Cassa</CheckField></FormRow>
              <FormRow><CheckField on>Conto Corrente Condominio</CheckField></FormRow>
              <FormRow $top={12}><CheckField on>Consuntivo</CheckField></FormRow>
              <FormRow $gap={2}><label htmlFor="periodo">Periodo di Esercizio:</label><Picker as="div" $w={58} $h={10}><select id="periodo" /></Picker><RunButton>Avvia</RunButton></FormRow>
            </Panel>
            <Panel $w={100} $h={58} $pad="1px 0 0 3px">
              <FormRow $gap={4}><CheckField on> Verbali Condominiali</CheckField><CheckField on>{"Leggi/Decreti\nLegislativi"}</CheckField></FormRow>
              <FormRow $in={2} $top={11}><CheckField on>Ricevuta/e</CheckField></FormRow>
              <FormRow $in={3} $gap={12}><CheckField on>Estratti Conto</CheckField><CheckField on>Avvisi Assemblea</CheckField></FormRow>
            </Panel>
          </FormBody>
          <Preview />
        </FormWindow>
        <CostDialog role="dialog" aria-label="Descrizione Spese Condomiali">
          <FormTitle $active><FormGlyph /><span>Descrizione Spese Condomiali</span><Icon w={5} h={6} box="0 0 8 8"><path d="M1 .500l6 7M7 .500l-6 7" /></Icon></FormTitle>
          <Heading><span>Condominio:</span><span>Condominio New Generation</span></Heading>
          <ChecksRow>
            {["A", "B", "C", "D", "E"].map(l => <CheckField key={l} light>{`Tabella Millesima ${l}`}</CheckField>)}
          </ChecksRow>
          <CostGrid>
            <colgroup><col style={{ width: 6 }} />{COST_COLUMNS.map(([n, w]) => <col key={n} style={{ width: w }} />)}</colgroup>
            <thead><tr><CostHead />{COST_COLUMNS.map(([n, , on]) => <CostHead key={n} $on={on}><div><span>{n}</span>{n && <Icon w={3} h={3} box="0 0 3 3" stroke="none"><path d="M0 1h3L1.500 3z" fill="#333" /></Icon>}</div></CostHead>)}</tr></thead>
            <tbody>
              <tr><NewCell $mark>✱</NewCell><NewCell $edit><Caret size={4} /></NewCell><NewCell /><NewCell /><NewCell>0,00 €</NewCell><NewCell /><NewCell /></tr>
              {[1, 2, 3, 4, 5, 6].map(r => <tr key={r}>{[0, 1, 2, 3, 4, 5, 6].map(c => <td key={c} />)}</tr>)}
            </tbody>
          </CostGrid>
          <RecordBar>
            <span>Record:</span>
            <button aria-label="Primo"><Icon w={4} h={4} box="0 0 4 4" stroke="none"><path d="M0 0h1v4H0zM4 0v4L1 2z" fill="#444" /></Icon></button>
            <RecordInput $w={16} aria-label="Record" defaultValue="1 di 1" />
            <button aria-label="Ultimo"><Icon w={4} h={4} box="0 0 4 4" stroke="none"><path d="M0 0l3 2-3 2zM3 0h1v4H3z" fill="#444" /></Icon></button>
            <Icon w={4} h={5} box="0 0 4 5" stroke="#aaa"><path d="M0 1h4L2 3v2" /></Icon>
            <Muted>Nessun filtro</Muted><RecordInput $w={22} aria-label="Cerca" defaultValue="Cerca" />
            <RecordScroll>
              <ScrollArrow aria-label="Sinistra"><Icon w={3} h={3} box="0 0 6 6" stroke="none" fill="#111"><path d={LEFT} /></Icon></ScrollArrow><Thumb /><Track $grow={2} />
              <ScrollArrow aria-label="Destra"><Icon w={3} h={3} box="0 0 6 6" stroke="none" fill="#111"><path d={RIGHT} /></Icon></ScrollArrow>
            </RecordScroll>
          </RecordBar>
        </CostDialog>
      </AccessBody>
      <AccessStatus><span>Visualizzazione Maschera</span><span>BLOC NUM</span></AccessStatus>
      <Taskbar>
        {TASKS.map(([art, open, on], i) => (
          <TaskButton key={i} $open={open} $on={on} aria-label={`Applicazione ${i + 1}`}><Icon w={8} h={9} box="0 0 9 9">{art}</Icon></TaskButton>
        ))}
        <Tray>
          <Icon w={9} h={10} box="0 0 9 10" stroke="none"><circle cx="6" cy="3" r="3" fill="#f2672b" /><path d="M1 9c-1-3 1-4 2-4 1-2 4-1 4 1 2 0 2 3 1 3z" fill="#dce9fb" /></Icon>
          <span>18°C &nbsp; Nuvoloso</span>
          <Icon w={5} h={5} box="0 0 6 6"><path d="M1 4l2-2 2 2" /></Icon>
          <Icon w={4} h={7} box="0 0 4 7"><path d="M.500 1.500h3v4h-3zM1.500 3h1" strokeWidth=".7" /></Icon>
          <Icon w={6} h={7} box="0 0 6 7"><path d="M.500.500h5v5h-5z" strokeWidth=".7" /><path d="M3 3h3v3H3z" fill="#f5a623" stroke="none" /></Icon>
          <Icon w={6} h={7} box="0 0 6 7"><path d="M.500 1h5v3.500h-5zM3 4.500V6.500" strokeWidth=".7" /></Icon>
          <Icon w={5} h={7} box="0 0 5 7"><path d="M.500 2.500L2.500 1v5L.500 4.500zM4 2v3" strokeWidth=".7" /></Icon>
          <Icon w={6} h={7} box="0 0 6 7"><path d="M1 6l4-5M2 4l2 2" /></Icon>
          <span>ITA</span>
          <time>02:40<br />11/10/2023</time>
          <Icon w={7} h={8} box="0 0 7 8"><path d="M.500.500h6v5h-2l-1 1.500-1-1.500h-2z" /></Icon>
        </Tray>
      </Taskbar>
    </AccessWindow>
  );
}

export default function App() {
  return (
    <>
      <GlobalStyle />
      <Desktop>
        <Legal />
        <Excel />
        <Access />
      </Desktop>
    </>
  );
}
